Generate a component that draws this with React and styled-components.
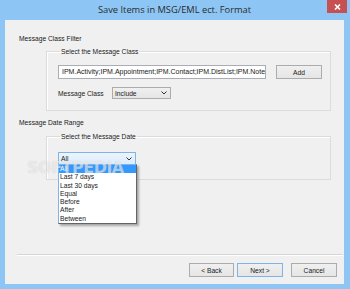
import React from 'react';
import styled, { createGlobalStyle } from 'styled-components';

const Global = createGlobalStyle`
  html, body { margin: 0; padding: 0; background: #8dc6f4; }
  body { font-family: "Liberation Sans", Arial, sans-serif; }
`;

const Window = styled.div`
  position: relative;
  width: 350px;
  height: 289px;
  box-sizing: border-box;
  display: flex;
  flex-direction: column;
  background: #8dc6f4;
  padding: 0 6px 5px 5px;
  overflow: hidden;
`;

const TitleBar = styled.div`
  height: 20px;
  display: grid;
  grid-template-columns: 1fr auto 1fr;
  align-items: start;
`;

const Title = styled.div`
  grid-column: 2;
  font-family: "Open Sans", "Noto Sans", sans-serif;
  font-size: 9.3px;
  line-height: 20px;
  color: #2b2b2b;
  white-space: nowrap;
`;

const CloseButton = styled.div`
  grid-column: 3;
  justify-self: end;
  margin-right: -3px;
  width: 20px;
  height: 13px;
  background: #c75050;
  display: flex;
  align-items: center;
  justify-content: center;
`;

const Content = styled.div`
  flex: 1;
  background: #f0f0f0;
  display: flex;
  flex-direction: column;
  padding: 14px 7px 7px 14px;
  font-size: 6.7px;
  color: #1a1a1a;
`;

const SectionLabel = styled.div`
  line-height: 9px;
  margin-top: ${p => p.$top || 0}px;
`;

const GroupBox = styled.fieldset`
  margin: ${p => p.$top}px 0 0 27px;
  width: 285px;
  box-sizing: border-box;
  border: 1px solid #dcdcdc;
  box-shadow: inset 1px 1px 0 #fff;
  padding: 0 0 ${p => p.$bottom}px 11px;
  min-width: 0;
`;

const Legend = styled.legend`
  padding: 0 1px;
  margin-left: 2px;
  line-height: 9px;
`;

const Row = styled.div`
  display: flex;
  align-items: center;
  gap: ${p => p.$gap || 0}px;
  margin-top: ${p => p.$top || 0}px;
`;

const TextBox = styled.div`
  width: 208px;
  height: 14px;
  box-sizing: border-box;
  border: 1px solid #abadb3;
  background: #fff;
  padding-left: 3px;
  font-size: 7px;
  line-height: 12px;
  white-space: nowrap;
  overflow: hidden;
`;

const Button = styled.div`
  width: ${p => p.$w || 46}px;
  height: 14px;
  box-sizing: border-box;
  margin-left: ${p => p.$gap || 0}px;
  border: 1px solid ${p => (p.$focus ? '#7eb4ea' : '#acacac')};
  background: linear-gradient(#f0f0f0, #e5e5e5);
  display: flex;
  align-items: center;
  justify-content: center;
`;

const FieldLabel = styled.span`
  width: 54px;
`;

const Select = styled.div`
  position: relative;
  width: ${p => p.$w}px;
  height: ${p => p.$h}px;
  box-sizing: border-box;
  border: 1px solid ${p => (p.$focus ? '#7eb4ea' : '#acacac')};
  background: ${p => (p.$focus ? 'linear-gradient(#ecf4fc, #dcecfc)' : 'linear-gradient(#f0f0f0, #e5e5e5)')};
  display: flex;
  align-items: center;
  justify-content: space-between;
  padding: 0 3px 0 2px;
`;

const DropList = styled.div`
  position: absolute;
  top: 100%;
  left: -1px;
  width: 79px;
  box-sizing: border-box;
  border: 1px solid #646464;
  border-color: #7eb4ea #646464 #646464 #7eb4ea;
  background: #fff;
  box-shadow: 2px 2px 2px rgba(0, 0, 0, 0.3);
  z-index: 2;
`;

const Option = styled.div`
  height: 8.28px;
  line-height: 8.28px;
  padding-left: 1px;
  background: ${p => (p.$active ? '#3399ff' : 'transparent')};
  color: ${p => (p.$active ? '#fff' : '#1a1a1a')};
`;

const Separator = styled.div`
  margin: auto 0 0 -2px;
  width: 326px;
  height: 1px;
  background: #d5d5d5;
  border-bottom: 1px solid #fff;
`;

const ButtonRow = styled.div`
  display: flex;
  justify-content: flex-end;
  margin-top: 7px;
`;

/* softpedia watermark stamped over the screenshot */
const Watermark = styled.div`
  position: absolute;
  left: 27px;
  top: 158px;
  font-family: "DejaVu Sans", sans-serif;
  font-weight: bold;
  font-size: 16px;
  letter-spacing: -0.5px;
  color: rgba(255, 255, 255, 0.6);
  text-shadow: 0 0 1px rgba(0, 0, 0, 0.18);
  pointer-events: none;
  z-index: 3;
`;

const Chevron = () => (
  <svg width="6" height="4" viewBox="0 0 6 4">
    <polyline points="0.5,0.5 3,3 5.5,0.5" fill="none" stroke="#333" strokeWidth="1" />
  </svg>
);

const dates = ['All', 'Last 7 days', 'Last 30 days', 'Equal', 'Before', 'After', 'Between'];

export default function App() {
  return (
    <>
      <Global />
      <Window>
        <TitleBar>
          <Title>Save Items in MSG/EML ect. Format</Title>
          <CloseButton>
            <svg width="7" height="6" viewBox="0 0 7 6">
              <path d="M1 0.5 L6 5.5 M6 0.5 L1 5.5" stroke="#fff" strokeWidth="1.6" />
            </svg>
          </CloseButton>
        </TitleBar>
        <Content>
          <SectionLabel>Message Class Filter</SectionLabel>
          <GroupBox $top={4} $bottom={11}>
            <Legend>Select the Message Class</Legend>
            <Row $gap={10} $top={9}>
              <TextBox>IPM.Activity;IPM.Appointment;IPM.Contact;IPM.DistList;IPM.Note</TextBox>
              <Button>Add</Button>
            </Row>
            <Row $top={8}>
              <FieldLabel>Message Class</FieldLabel>
              <Select $w={59} $h={12}>
                <span>Include</span>
                <Chevron />
              </Select>
            </Row>
          </GroupBox>
          <SectionLabel $top={7}>Message Date Range</SectionLabel>
          <GroupBox $top={5} $bottom={14}>
            <Legend>Select the Message Date</Legend>
            <Row $top={11}>
              <Select $w={78} $h={13} $focus>
                <span>All</span>
                <Chevron />
                <DropList>
                  {dates.map((d, i) => (
                    <Option key={d} $active={i === 0}>{d}</Option>
                  ))}
                </DropList>
              </Select>
            </Row>
          </GroupBox>
          <Separator />
          <ButtonRow>
            <Button $w={45}>&lt; Back</Button>
            <Button $gap={3} $focus>Next &gt;</Button>
            <Button $gap={8}>Cancel</Button>
          </ButtonRow>
        </Content>
        <Watermark>SOFTPEDIA</Watermark>
      </Window>
    </>
  );
}
